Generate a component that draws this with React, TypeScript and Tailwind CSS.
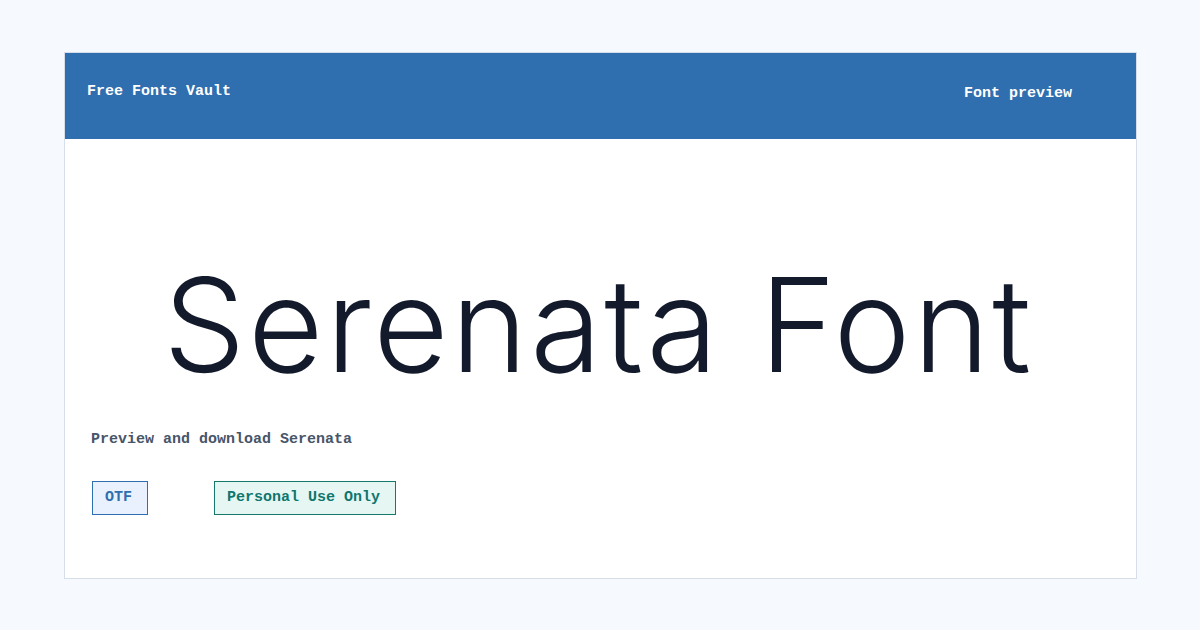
export default function App() {
  const mono = { fontFamily: '"Liberation Mono", "DejaVu Sans Mono", monospace' };

  return (
    <main className="min-h-screen w-full bg-[#f6f9fe] pt-[52px] pl-16 pr-[63px] font-bold" style={mono}>
      <div className="border border-[#d6deea] bg-white">
        <header className="flex items-start justify-between bg-[#2f6eaf] h-[86px] pl-[22px] pr-16 pt-[28px] text-white text-[15px]">
          <span>Free Fonts Vault</span>
          <span className="pt-[2px]">Font preview</span>
        </header>

        <section className="flex flex-col px-[26px] pb-[63px]">
          <div className="flex justify-center pt-[121px] pr-[4px]">
            <h1
              className="text-[130px] leading-none font-light text-[#131a2b] tracking-[0.02em]"
              style={{ fontFamily: 'Inter, "Open Sans", sans-serif' }}
            >
              Serenata Font
            </h1>
          </div>

          <p className="mt-[40px] text-[15px] text-[#475569] leading-5">Preview and download Serenata</p>

          <div className="flex items-center gap-[66px] mt-[31px] pl-[1px]">
            <span className="border border-[#2f6eaf] bg-[#e8f1fd] text-[#2f6eaf] text-[15px] pl-[12px] pr-[15px] h-[34px] flex items-center">
              OTF
            </span>
            <span className="border border-[#16786a] bg-[#e6f6f2] text-[#0f766e] text-[15px] pl-[12px] pr-[15px] h-[34px] flex items-center">
              Personal Use Only
            </span>
          </div>
        </section>
      </div>
    </main>
  );
}
